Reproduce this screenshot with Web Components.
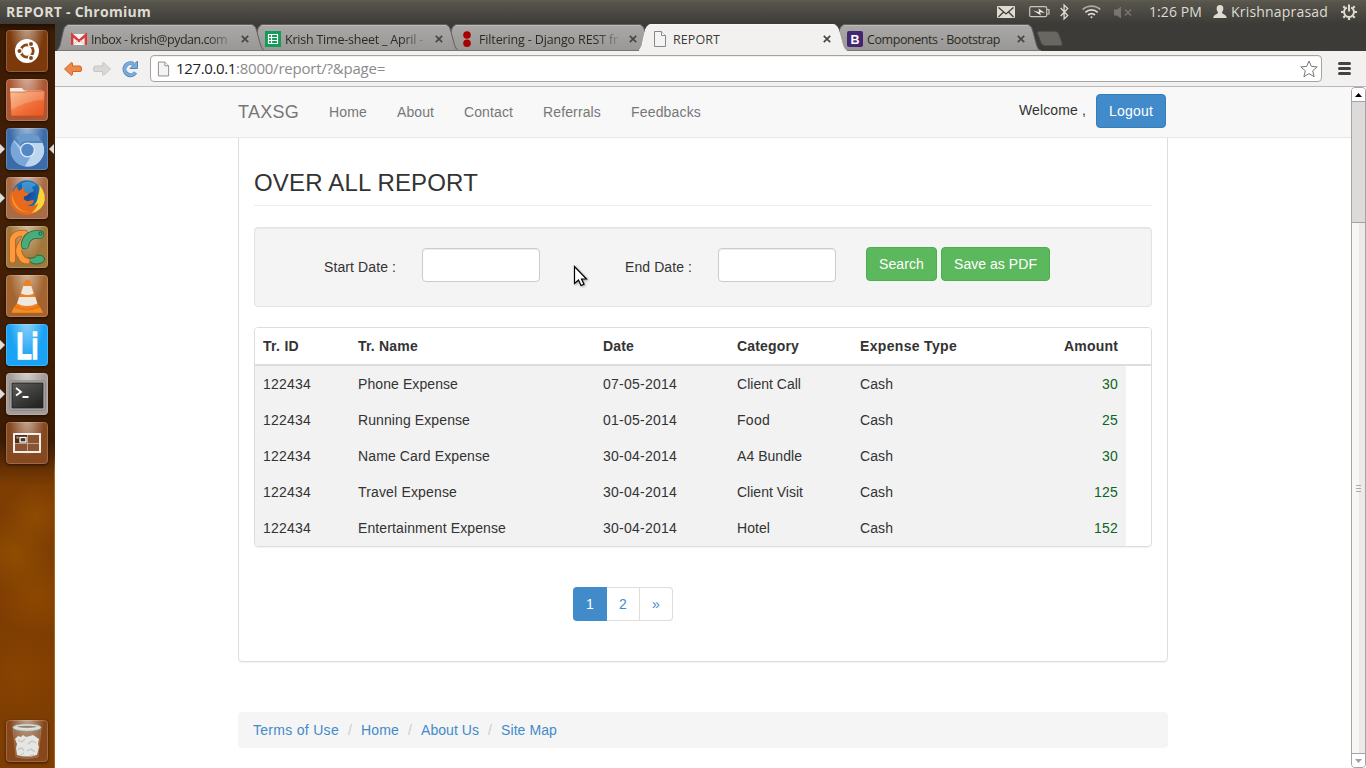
<!DOCTYPE html>
<html lang="en">
<head>
<meta charset="utf-8">
<title>REPORT - Chromium</title>
<style>
html,body{margin:0;height:100%;overflow:hidden;background:#fff}
body{font-family:"Liberation Sans",Arial,sans-serif}
</style>
</head>
<body>
<desk-top></desk-top>
<script>
const define = (name, html, setup) => customElements.define(name, class extends HTMLElement {
  connectedCallback() {
    if (this.shadowRoot) return;
    const t = document.createElement('template');
    t.innerHTML = typeof html === 'function' ? html(this) : html;
    this.attachShadow({mode: 'open'}).append(t.content.cloneNode(true));
    if (setup) setup(this);
  }
});

/* Text that tracks its letters to fill the width given in "w" */
define('fit-text', `<style>:host{display:inline-block;white-space:pre;flex:none}span{display:inline-block}</style><span><slot></slot></span>`, el => {
  const w = +el.getAttribute('w'), s = el.shadowRoot.querySelector('span');
  const n = el.textContent.length, nat = s.getBoundingClientRect().width;
  if (w && nat) s.style.letterSpacing = ((w - nat) / n).toFixed(3) + 'px';
  el.style.width = w + 'px';
});

define('top-panel', `
<style>
:host{display:flex;align-items:center;height:24px;box-sizing:border-box;padding-left:6px;background:linear-gradient(#5f5d50 0,#57554c 2px,#3c3b37);color:#dfdbd2;font:14px/24px "Open Sans","Noto Sans",sans-serif}
.title{font-weight:700;font-size:14px}
.gap{flex:1}
svg{display:block;flex:none}
.clock{margin-right:11px}
</style>
<fit-text class="title" w="145">REPORT - Chromium</fit-text><span class="gap"></span>
<svg width="32" height="24"><rect x="0" y="6" width="18" height="12" rx="1" fill="#dfdbd2"/><path d="M1.500 7.500l7.500 6.500 7.500-6.500M1.500 17l5-5M16.500 17l-5-5" fill="none" stroke="#3f3e39" stroke-width="1.300"/></svg>
<svg width="31" height="24"><rect x=".7" y="6.700" width="17" height="10" rx="1.500" fill="none" stroke="#c9c5bc" stroke-width="1.200"/><path d="M18 9.500h2v4.500h-2" fill="none" stroke="#c9c5bc" stroke-width="1.200"/><path d="M4 10.500l6 1.500-.5-3.500 6.500 4.500-5-.8 1 3.300z" fill="#e9e5dc"/></svg>
<svg width="22" height="24"><path d="M.7 8l7 7.500-3.600 3.500V5l3.600 3.500L.7 16" fill="none" stroke="#dfdbd2" stroke-width="1.300"/></svg>
<svg width="32" height="24" fill="none" stroke="#dfdbd2" stroke-width="1.700"><path d="M.7 9.500a13 13 0 0 1 17.600 0" stroke="#aaa79f"/><path d="M3.300 12.300a9.300 9.300 0 0 1 12.400 0M6 15a5.400 5.400 0 0 1 7 0"/><circle cx="9.500" cy="17.300" r="1" fill="#dfdbd2" stroke="none"/></svg>
<svg width="35" height="24"><path d="M0 9.500h3l4-3v12l-4-3h-3z" fill="#77756d"/><path d="M11 9.500l6 6m0-6l-6 6" stroke="#77756d" stroke-width="1.500"/></svg>
<fit-text class="clock" w="53">1:26 PM</fit-text>
<svg width="18" height="24"><path d="M7 5c4.200 0 4 5 2 7.300-.3 2.500 4.500 1.500 4.700 5.700H.300c.2-4.200 5-3.200 4.700-5.700C3 10 2.800 5 7 5z" fill="#dfdbd2"/></svg>
<fit-text w="97">Krishnaprasad</fit-text>
<svg width="38" height="24"><g transform="translate(21 12)" fill="none" stroke="#dfdbd2"><path d="M-2.200-4.500a5 5 0 1 0 4.400 0" stroke-width="2"/><path d="M0-7.500v7" stroke-width="2"/><path d="M5.500 0H8M-5.500 0H-8M0 5.500V8M4 4l1.700 1.700M-4 4l-1.700 1.700M4-4l1.700-1.700M-4-4l-1.700-1.700" stroke-width="2.200"/></g></svg>`);

const ICONS = {
ubuntu:`<circle cx="21" cy="21" r="12" fill="#fff"/><circle cx="21" cy="21" r="6.200" fill="none" stroke="#8a4617" stroke-width="2.800"/><g stroke="#fff" stroke-width="1.200" fill="#8a4617"><circle cx="13.500" cy="21" r="2.600"/><circle cx="25" cy="14" r="2.600"/><circle cx="25" cy="28" r="2.600"/></g>`,
files:`<path d="M4 10q0-1 1-1h11l2 2.500h19v7H4z" fill="#f5e9e2"/><path d="M4 13h15l3-1h16q1 0 1 1l-1 23q0 1-1 1H6q-1 0-1-1z" fill="url(#fo)" stroke="#c4481f" stroke-width=".6"/><path d="M4.500 17l-.5-3.500h16l3-1h15l-.3 8Q20 22 5 31z" fill="#fff" opacity=".18"/>`,
chromium:`<circle cx="21.500" cy="22" r="16.500" fill="#a9c7e9"/><path d="M21.500 5.500A16.500 16.500 0 0 1 36.500 15H21.500a7 7 0 0 0-6.300 4L8 12a16 16 0 0 1 13.500-6.500z" fill="#5585bd"/><path d="M7.500 12.500A16.500 16.500 0 0 0 19 38.300l5.500-10A7 7 0 0 1 15 24z" fill="#79a6d8"/><path d="M22 15h14.500A16.500 16.500 0 0 1 19 38.300L28 24z" fill="#bdd6ef"/><circle cx="21.500" cy="22" r="7.600" fill="#dceafa"/><circle cx="21.500" cy="22" r="6.200" fill="#5487c3"/><path d="M10 9q11-7 23 0l1 4H21q-5 0-7 4z" fill="#7faedb" opacity=".5"/>`,
firefox:`<circle cx="21" cy="18" r="14.800" fill="url(#ff)"/><path d="M16 6q8-4 14 2l-4 2 2 4-6 3-6-2z" fill="#62b6e5" opacity=".55"/><path d="M34.500 11q6 9 1.500 17-5 9.500-15 10Q9 37.500 5 28 2 20 6 13l1.500 2Q8 11 11 9.500q0 3 2.500 4.500 1.500-3 5.500-3.500-2 2.500-1 4.500l4.500 1q0 2.500-4.500 3.500-.5 1.500 0 3 3 3 6.500 1 3-1 3.500.5-1.500 4-7 4.500Q29 30.500 32 24q2-5 .5-9z" fill="#e8691b"/><path d="M33.500 8q8 10 4 19.500-4 7-12 8.500 6-5 6.500-10-2 2-4 2.500 4-5 4-9.500 2-5 1.500-11z" fill="#fbd436"/><path d="M6 17q-1 13 9 17 5 2 9 1-14 0-18-18z" fill="#f79330"/>`,
pycharm:`<g fill="none" stroke-linecap="round" stroke-linejoin="round"><path d="M22 32q7 1 9-3 8 0 7.500 5-2 4-8.500 4-6 0-8-6z" fill="#48ad79" stroke="#1d6a48"/><path d="M6.500 34V14q1-7 12-7" stroke="#c2561a" stroke-width="6.600"/><path d="M19 10q-2 6-5 10-3 6 1 11 2 4 6 4" stroke="#c2561a" stroke-width="6.600"/><path d="M6.500 34V14q1-7 12-7M19 10q-2 6-5 10-3 6 1 11 2 4 6 4" stroke="#fb9a3c" stroke-width="5.200"/><path d="M19 19q1-9 10-10.500h5" stroke="#1d6a48" stroke-width="8.500"/><path d="M19 19q1-9 10-10.500h5" stroke="#48ad79" stroke-width="7"/></g><circle cx="34.500" cy="7.500" r="1.600" fill="none" stroke="#195b3c"/>`,
vlc:`<path d="M8 32l3-4h20l3 4 3 6H6z" fill="#e87512"/><path d="M19 6q2-3 5 0l8 25q-11 6-22 0z" fill="#ee8223"/><path d="M17.300 11h8l2.400 7.500q-6 3-12.800 0zM13.200 22h16.200l2 6.500q-11 5-20.400 0z" fill="#eee8df"/><path d="M5.500 37.500l2.500-5q13 6 26 0l3 5z" fill="#f58d20"/>`,
li:`<text x="10.500" y="34.500" font-family="Liberation Sans" font-weight="700" font-size="36" textLength="22" lengthAdjust="spacingAndGlyphs" fill="#fff" stroke="#fff" stroke-width="1.500">Li</text>`,
terminal:`<rect x="4" y="8" width="35" height="29" rx="1.500" fill="#c9c7c5" stroke="#777"/><rect x="6" y="10" width="31" height="25" fill="url(#tm)" stroke="#222"/><path d="M10 15l5 4-5 3.500M16.500 24h6" fill="none" stroke="#fff" stroke-width="1.800"/>`,
workspace:`<rect x="8" y="12" width="26" height="18" fill="#8a5430" stroke="#fff" stroke-width="1.800"/><rect x="9" y="13" width="12" height="8" fill="#4d2d17"/><path d="M21.500 13v16M9 21.500h24" stroke="#b9a291" stroke-width="1"/><rect x="14" y="15.500" width="6" height="4.500" fill="#4d2d17" stroke="#fff" stroke-width="1.300"/><path d="M10.500 14.500h2v2h-2z" fill="#aaa"/>`,
trash:`<path d="M7 9h28l-3 28q-11 3-22 0z" fill="#b8a28c" opacity=".3" stroke="#d4c4b4"/><path d="M9 19l3-3 3 1 2-2 3 2 4-1 3-1 3 2 3 2-1 5 1 3-2 8q-10 3-20 0l-1-7 1-4z" fill="#e5e6e3"/><path d="M12 20l4 2 3-3M22 24l4-3 4 2M12 29l4-1 2 3M21 31l4-2 4 3M15 35l3-2M24 36l4-1" fill="none" stroke="#c3c5c2" stroke-width="1.300"/><ellipse cx="21" cy="7.500" rx="14.300" ry="3.800" fill="#d5dcd9" stroke="#8a9592" stroke-width=".8"/><ellipse cx="21" cy="6.800" rx="10.500" ry="1.500" fill="#9a8063" stroke="#f7faf7" stroke-width=".6"/>`
};
define('launcher-item', el => `
<style>
:host{display:block;position:relative;height:42px;width:54px;flex:none}
.tile{margin-left:6px;width:42px;height:42px;border-radius:4px;box-sizing:border-box;background:radial-gradient(ellipse at 50% -15%,#ffffff90,#ffffff00 60%),${el.getAttribute('bg')};box-shadow:inset 0 0 0 1px #ffffff30,0 1px 3px #0009}
svg{display:block;overflow:visible}
.l,.r{position:absolute;top:16px;width:0;height:0;border:5px solid transparent}
.l{left:0;border-left-color:#ddd;border-right:0}.r{right:0;border-right-color:#ddd;border-left:0}
</style>
<div class="tile"><svg width="42" height="42"><defs>
<linearGradient id="fo" x2="1" y2="1"><stop stop-color="#f9b27b"/><stop offset=".55" stop-color="#f1703b"/><stop offset="1" stop-color="#e6531f"/></linearGradient>
<radialGradient id="ff"><stop stop-color="#1b3f8f"/><stop offset="1" stop-color="#1677bd"/></radialGradient>
<linearGradient id="tm" x2=".7" y2="1"><stop stop-color="#5c5c5a"/><stop offset="1" stop-color="#252624"/></linearGradient></defs>${ICONS[el.getAttribute('icon')]}</svg></div>
${el.hasAttribute('running') ? '<i class="l"></i>' : ''}${el.hasAttribute('active') ? '<i class="r"></i>' : ''}`);

define('side-launcher', `
<style>
:host{display:flex;flex-direction:column;gap:7px;width:55px;box-sizing:border-box;padding:6px 0 6px;
background:linear-gradient(#0000,#0000 430px,#a9641f 450px) right/1px 100% no-repeat,linear-gradient(#241002 0,#3d1c04 8px,#432006 30%,#3c1b03 56%,#54290300 62%),radial-gradient(circle at 15px 530px,#8f4d02,#8f4d0200 40px),radial-gradient(circle at 35px 572px,#8d4700,#8d470000 40px),radial-gradient(circle at 35px 492px,#8f4b03,#8f4b0300 32px),radial-gradient(circle at 20px 650px,#884300,#88430000 45px),#7e3d02}
.gap{flex:1}
</style>
<launcher-item icon="ubuntu" bg="#7c3a0c"></launcher-item>
<launcher-item icon="files" bg="#ab5733"></launcher-item>
<launcher-item icon="chromium" bg="#3b6ca8" running active></launcher-item>
<launcher-item icon="firefox" bg="#a86b46" running></launcher-item>
<launcher-item icon="pycharm" bg="#a2783a"></launcher-item>
<launcher-item icon="vlc" bg="#a3642f"></launcher-item>
<launcher-item icon="li" bg="#1aa3f4" running></launcher-item>
<launcher-item icon="terminal" bg="#a59c98" running></launcher-item>
<launcher-item icon="workspace" bg="#86481f"></launcher-item>
<span class="gap"></span>
<launcher-item icon="trash" bg="#88471b"></launcher-item>`);

const DOC = `<path d="M1.500.5h7l4 4v11h-11z" fill="#f4f4f4" stroke="#888"/><path d="M8.500.5v4h4" fill="#fff" stroke="#888"/>`;
const FAV = {
gmail:`<rect y="3" width="16" height="11" rx="1" fill="#f6f2f2"/><path d="M1.200 14V4l6.800 6 6.800-6v10" fill="none" stroke="#d93a3a" stroke-width="2.400"/><path d="M2.500 13.500l4-4M13.500 13.500l-4-4" stroke="#d8bcbc"/>`,
sheet:`<rect width="16" height="16" fill="#119d58"/><path d="M3.500 3.500h9v9h-9zM3.500 6.500h9M3.500 9.500h9M6.500 3.500v9" fill="none" stroke="#fff" stroke-width="1.200"/>`,
django:`<circle cx="8" cy="4" r="3.800" fill="#a70000"/><circle cx="8" cy="12.200" r="3.800" fill="#a70000"/>`,
doc:DOC,
boot:`<rect width="16" height="16" rx="2" fill="#43266f"/><text x="8" y="12.500" text-anchor="middle" font-family="Liberation Sans" font-weight="700" font-size="12.500" fill="#fff">B</text>`
};
define('browser-tab', el => {
  const on = el.hasAttribute('active'), c = on ? '#f2f1f0' : 'url(#g)';
  return `
<style>
:host{display:grid;grid-template-columns:14px 20px 142px 1fr;align-items:center;width:208px;height:27px;position:relative;flex:none}
:host(:not(:first-of-type)){margin-left:-14px}
.shape{position:absolute;left:0;top:0}
.fav,.x,.label{position:relative;display:block}
.fav{grid-column:2;margin-top:3px}
.label{overflow:hidden;width:${el.hasAttribute('fade') ? 140 : 142}px;height:24px;margin-top:2px;font:12.500px/25px "Open Sans","Noto Sans",sans-serif;color:${on ? '#3c3b37' : '#2c2b22'};${el.hasAttribute('fade') ? '-webkit-mask-image:linear-gradient(90deg,#000 84%,#0002)' : ''}}
.x{margin:3px 0 0 7px}
</style>
<svg class="shape" width="208" height="27"><defs><linearGradient id="g" x2="0" y2="1"><stop stop-color="#aaa9a7"/><stop offset="1" stop-color="#989795"/></linearGradient></defs>
<path d="M-1 27Q1.500 26 3 21.500L6.500 6Q8 .5 12 .5H194Q198 .5 199.500 6L203.500 21Q205 26 208 27" fill="${c}" stroke="${on ? '#f8f8f7' : '#61605c'}"/>${on ? '' : '<path d="M11 1.500h184" stroke="#bcbbb8"/><path d="M0 26.500h208" stroke="#777673"/>'}</svg>
<svg class="fav" width="16" height="16">${FAV[el.getAttribute('icon')]}</svg>
<span class="label"><fit-text w="${el.getAttribute('w')}">${el.getAttribute('label')}</fit-text></span>
<svg class="x" width="10" height="10"><path d="M1.800 1.800l6.400 6.400m0-6.400L1.800 8.200" stroke="#484741" stroke-width="1.700"/></svg>`;
});

define('tab-strip', `
<style>
:host{display:flex;height:27px;padding-left:2px;background:#3c3b37}
.new{margin:7px 0 0 -4px}
</style>
<browser-tab style="z-index:4" icon="gmail" label="Inbox - krish@pydan.com" w="136" fade></browser-tab>
<browser-tab style="z-index:3" icon="sheet" label="Krish Time-sheet _ April -" w="138" fade></browser-tab>
<browser-tab style="z-index:2" icon="django" label="Filtering - Django REST fr" w="139" fade></browser-tab>
<browser-tab style="z-index:5" icon="doc" label="REPORT" w="47" active></browser-tab>
<browser-tab style="z-index:1" icon="boot" label="Components · Bootstrap" w="133"></browser-tab>
<svg class="new" width="26" height="16"><path d="M.5 2Q0 .5 2 .5h16q3 0 4 3l3 9q.8 2-1.500 2H8q-3 0-4-3z" fill="#686762" stroke="#51504b"/></svg>`);

define('tool-bar', `
<style>
:host{display:flex;align-items:center;height:36px;box-sizing:border-box;background:#f2f1f0;border-bottom:1px solid #b9b8b6;padding-left:8px}
svg{display:block;flex:none}
.box{display:flex;align-items:center;box-sizing:border-box;width:1172px;height:27px;border:1px solid #a5a4a2;border-radius:4px;background:#fff;padding:0 3px 0 6px;box-shadow:inset 0 1px 1px #0001}
.url{font:15px/25px "Open Sans","Noto Sans",sans-serif;color:#222;margin-left:6px;display:flex;height:25px}
.dim{color:#8b8b8b}
.gap{flex:1}
</style>
<svg width="29" height="20"><path d="M1.500 10L8.500 3.500q1.500-.5 1 3.500H17q1.500 0 1.500 3T17 12.500H9.500q.5 4-1 4z" fill="#ee8a49" stroke="#d0642a"/></svg>
<svg width="29" height="20"><path d="M18.500 10l-7-6.500q-1.500-.5-1 3.500H3q-1.500 0-1.500 3T3 12.500h7.500q-.5 4 1 4z" fill="#dad8d6" stroke="#c8c6c4"/></svg>
<svg width="29" height="20"><path d="M14.500 13.500A6 6 0 1 1 12.500 5" fill="none" stroke="#4f86bd" stroke-width="4"/><path d="M14.500 13.500A6 6 0 1 1 12.500 5" fill="none" stroke="#79ade0" stroke-width="2.600"/><path d="M16.500 2v7.500H9z" fill="#79ade0" stroke="#4f86bd"/></svg>
<div class="box"><svg width="13" height="16" viewBox="0 0 14 16">${DOC}</svg><span class="url"><fit-text w="60">127.0.0.1</fit-text><fit-text class="dim" w="149">:8000/report/?&amp;page=</fit-text></span><span class="gap"></span>
<svg width="18" height="18"><path d="M9 1l2.300 5.400 5.900.5-4.500 3.900 1.400 5.900L9 13.600l-5.100 3.100 1.400-5.900L.8 6.900l5.900-.5z" fill="#fff" stroke="#777" stroke-linejoin="round"/></svg></div>
<svg width="44" height="20"><path d="M17.500 4.500h10M17.500 9.500h10M17.500 14.500h10" stroke="#42423f" stroke-width="3" stroke-linecap="round"/></svg>`);

define('bs-button', `
<style>
:host{display:inline-block;box-sizing:border-box;height:34px;padding:6px 12px;border:1px solid #357ebd;border-radius:4px;background:#428bca;color:#fff;font-size:14px;line-height:20px;white-space:nowrap}
:host([kind=success]){background:#5cb85c;border-color:#4cae4c}
</style><slot></slot>`);

define('nav-bar', `
<style>
:host{display:flex;justify-content:center;height:51px;box-sizing:border-box;background:#f8f8f8;border-bottom:1px solid #e7e7e7;position:relative;z-index:1}
.in{width:930px;display:flex;align-items:flex-start;color:#777;font-size:14px}
.brand{font-size:18px;line-height:20px;padding:15px 15px 15px 0}
.item{padding:15px;line-height:20px}
.gap{flex:1}
.who{color:#333;line-height:20px;margin:13px 10px 0 0}
bs-button{margin:7px 2px 0 0}
</style>
<div class="in"><span class="brand"><fit-text w="61">TAXSG</fit-text></span><span class="item"><fit-text w="38">Home</fit-text></span><span class="item"><fit-text w="37">About</fit-text></span><span class="item"><fit-text w="49">Contact</fit-text></span><span class="item"><fit-text w="58">Referrals</fit-text></span><span class="item"><fit-text w="70">Feedbacks</fit-text></span><span class="gap"></span><fit-text class="who" w="67">Welcome ,</fit-text><bs-button><fit-text w="44">Logout</fit-text></bs-button></div>`);

define('search-well', `
<style>
:host{display:flex;box-sizing:border-box;height:80px;padding:19px 0 0 69px;background:#f4f4f4;border:1px solid #e3e3e3;border-radius:4px;box-shadow:inset 0 1px 1px rgba(0,0,0,.05);font-size:14px;line-height:20px}
label{margin-top:10px;width:98px}
label+i+label{width:93px}
i{box-sizing:border-box;width:118px;height:34px;margin:1px 85px 0 0;background:#fff;border:1px solid #ccc;border-radius:4px;box-shadow:inset 0 1px 1px rgba(0,0,0,.075)}
label+i+label+i{margin-right:30px}
bs-button{margin-right:4px}
</style>
<label><fit-text w="72">Start Date :</fit-text></label><i></i><label><fit-text w="67">End Date :</fit-text></label><i></i><bs-button kind="success"><fit-text w="45">Search</fit-text></bs-button><bs-button kind="success"><fit-text w="83">Save as PDF</fit-text></bs-button>`);

const fit = (w, s) => `<span><fit-text w="${w}">${s}</fit-text></span>`;
const ROWS = [['Phone Expense',100,'07-05-2014','Client Call',64,'30'],['Running Expense',112,'01-05-2014','Food',33,'25'],['Name Card Expense',132,'30-04-2014','A4 Bundle',65,'30'],['Travel Expense',99,'30-04-2014','Client Visit',66,'125'],['Entertainment Expense',148,'30-04-2014','Hotel',33,'152']];
define('report-table', `
<style>
:host{display:block;box-sizing:border-box;border:1px solid #ddd;border-radius:4px;box-shadow:0 1px 1px rgba(0,0,0,.05);overflow:hidden;height:220px;font-size:14px;line-height:20px}
.row{display:grid;grid-template-columns:95px 245px 134px 123px 157px 117px;width:871px;background:#f2f2f2}
.row span{padding:8px}
.row span:last-child{text-align:right;color:#0b6623}
.head{width:auto;background:#fff;font-weight:700;border-bottom:2px solid #ddd}
.row.head span:last-child{color:inherit}
</style>
<div class="row head">${fit(36,'Tr. ID')}${fit(60,'Tr. Name')}${fit(31,'Date')}${fit(62,'Category')}${fit(97,'Expense Type')}${fit(54,'Amount')}</div>
${ROWS.map(r => `<div class="row">${fit(48,'122434')}${fit(r[1],r[0])}${fit(74,r[2])}${fit(r[4],r[3])}${fit(33,'Cash')}${fit(r[5].length*8,r[5])}</div>`).join('')}`);

define('page-nav', `
<style>
:host{display:flex;font-size:14px;line-height:20px;color:#428bca}
span{box-sizing:border-box;height:34px;width:33px;text-align:center;padding:6px 0;border:1px solid #ddd;border-left:0;background:#fff}
.on{width:34px;background:#428bca;border-color:#428bca;color:#fff;border-radius:4px 0 0 4px;padding-left:1px}
span:last-child{border-radius:0 4px 4px 0}
</style><span class="on">1</span><span>2</span><span>»</span>`);

define('bread-crumb', `
<style>
:host{display:flex;box-sizing:border-box;height:36px;padding:8px 15px;background:#f5f5f5;border-radius:4px;font-size:14px;line-height:20px;color:#428bca}
span{display:flex}
span+span::before{content:"/";color:#ccc;width:13px;padding-left:9px}
</style>${fit(86,'Terms of Use')}${fit(38,'Home')}${fit(58,'About Us')}${fit(56,'Site Map')}`);

define('report-page', `
<style>
:host{display:block;background:#fff;color:#333;overflow:hidden;height:681px;min-width:0}
.panel{box-sizing:border-box;width:930px;height:536px;margin:-12px auto 50px;padding:41px 15px 0;border:1px solid #ddd;border-radius:4px;box-shadow:0 1px 1px rgba(0,0,0,.05)}
h1{margin:0 0 21px;font-size:24px;font-weight:400;line-height:30px;padding-bottom:9px;border-bottom:1px solid #eee;height:28px}
report-table{margin-top:20px}
page-nav{margin:40px 0 0 319px}
bread-crumb{width:930px;margin:0 auto}
</style>
<nav-bar></nav-bar>
<div class="panel"><h1><fit-text w="224">OVER ALL REPORT</fit-text></h1><search-well></search-well><report-table></report-table><page-nav></page-nav></div>
<bread-crumb></bread-crumb>`);

define('scroll-bar', `
<style>
:host{display:flex;flex-direction:column;width:15px;height:681px;box-sizing:border-box;border:1px solid #a5a4a2;border-radius:4px;background:#dcdbda;overflow:hidden}
.b{height:13px;background:#fff;display:flex;justify-content:center;align-items:center;flex:none}
.up{border-bottom:1px solid #a5a4a2}.dn{border-top:1px solid #a5a4a2}
.track{height:120px;flex:none}
.thumb{flex:1;border-top:1px solid #a5a4a2;background:linear-gradient(90deg,#f8f7f5 55%,#ebeae8 55%);display:flex;justify-content:center;align-items:center}
svg{display:block}
</style>
<div class="b up"><svg width="7" height="4"><path d="M3.500 0L7 4H0z" fill="#000"/></svg></div><div class="track"></div>
<div class="thumb"><svg width="5" height="7"><path d="M0 .5h5M0 3.500h5M0 6.500h5" stroke="#aaa9a7"/></svg></div>
<div class="b dn"><svg width="7" height="4"><path d="M3.500 4L0 0h7z" fill="#a2a19f"/></svg></div>`);

define('desk-top', `
<style>
:host{display:grid;grid-template:24px 744px / 55px 1311px;width:1366px;height:768px;overflow:hidden;position:relative}
top-panel{grid-column:1/3}
.win{display:flex;flex-direction:column}
.view{display:grid;grid-template-columns:1296px 15px}
.cur{position:absolute;left:573px;top:265px;filter:drop-shadow(1px 1px 1px #0005)}
</style>
<top-panel></top-panel><side-launcher></side-launcher>
<div class="win"><tab-strip></tab-strip><tool-bar></tool-bar><div class="view"><report-page></report-page><scroll-bar></scroll-bar></div></div>
<svg class="cur" width="16" height="24"><path d="M1.500 1.500v17l4-3.500 2.500 5.500 3-1.300-2.500-5.200h5z" fill="#fff" stroke="#000" stroke-width="1.200"/></svg>`);
</script>
</body>
</html>
